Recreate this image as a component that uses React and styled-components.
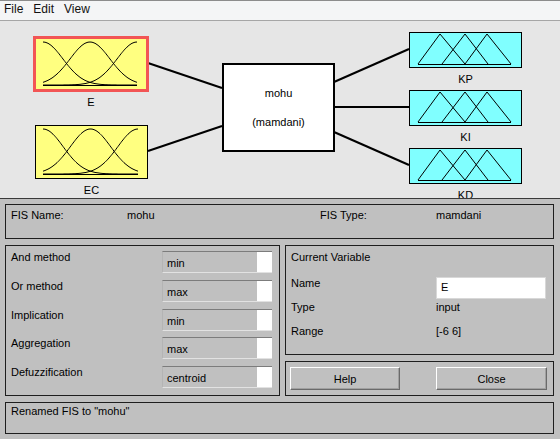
import React from 'react';
import styled, { createGlobalStyle } from 'styled-components';

const GlobalStyle = createGlobalStyle`
  html, body {
    margin: 0;
    padding: 0;
    background: #c0c0c0;
  }
  body {
    font-family: "Liberation Sans", Arial, sans-serif;
    font-size: 11px;
    color: #000;
  }
`;

const Window = styled.div`
  width: 560px;
  height: 439px;
  overflow: hidden;
  display: flex;
  flex-direction: column;
  background: #c0c0c0;
`;

const MenuBar = styled.div`
  box-sizing: border-box;
  height: 21px;
  display: flex;
  gap: 10px;
  padding: 1px 0 0 4px;
  background: #f4f5f6;
  border-top: 1px solid #8c8c8c;
  border-bottom: 1px solid #a6a6a6;
  font-size: 12px;
  line-height: 14px;
`;

const MenuItem = styled.span`
  color: #111;
`;

const Canvas = styled.div`
  position: relative;
  height: 177px;
  flex: none;
  background: #e6e6e6;
  border-bottom: 1px solid #3a3a3a;
  overflow: hidden;
`;

const Wires = styled.svg`
  position: absolute;
  left: 0;
  top: 0;
  pointer-events: none;
`;

const Node = styled.div`
  position: absolute;
  left: ${(p) => p.x}px;
  top: ${(p) => p.y}px;
  display: flex;
  flex-direction: column;
  align-items: center;
`;

const MfBox = styled.div`
  box-sizing: border-box;
  width: ${(p) => p.w}px;
  height: ${(p) => p.h}px;
  background: ${(p) => p.fill};
  border: ${(p) => (p.selected ? '3px solid #f25555' : '1px solid #000')};
  svg {
    display: block;
  }
`;

const NodeLabel = styled.div`
  margin-top: ${(p) => p.gap || 5}px;
  line-height: 13px;
`;

const SystemBox = styled.div`
  position: absolute;
  left: 222px;
  top: 42px;
  box-sizing: border-box;
  width: 113px;
  height: 89px;
  background: #fff;
  border: 2px solid #000;
  display: flex;
  flex-direction: column;
  align-items: center;
  justify-content: center;
  gap: 16px;
  line-height: 13px;
`;

const Bottom = styled.div`
  flex: 1;
  display: flex;
  flex-direction: column;
  gap: 6px;
  padding: 5px 6px 0 5px;
`;

const Panel = styled.div`
  box-sizing: border-box;
  border: 1px solid #1e1e1e;
  height: ${(p) => p.h}px;
`;

const FisPanel = styled(Panel)`
  display: grid;
  grid-template-columns: 116px 193px 116px 1fr;
  padding: 4px 0 0 5px;
  line-height: 13px;
`;

const MiddleRow = styled.div`
  display: flex;
  gap: 5px;
`;

const MethodPanel = styled(Panel)`
  width: 275px;
  padding: 5px 0 0 5px;
  display: flex;
  flex-direction: column;
`;

const MethodRow = styled.div`
  display: flex;
  align-items: flex-start;
  height: 29px;
`;

const MethodLabel = styled.div`
  width: 151px;
  line-height: 13px;
`;

const Popup = styled.div`
  box-sizing: border-box;
  width: 110px;
  height: 22px;
  display: flex;
  background: #c0c0c0;
  border-top: 1px solid #7c7c7c;
  border-left: 1px solid #b4b4b4;
  border-bottom: 1px solid #e2e2e2;
`;

const PopupText = styled.span`
  flex: 1;
  padding: 2px 0 0 4px;
  line-height: 19px;
`;

const PopupArrow = styled.span`
  width: 15px;
  background: #fff;
`;

const RightColumn = styled.div`
  width: 269px;
  display: flex;
  flex-direction: column;
  gap: 6px;
`;

const VarPanel = styled(Panel)`
  padding: 5px 0 0 5px;
`;

const VarTitle = styled.div`
  line-height: 13px;
  margin-bottom: 13px;
`;

const VarRow = styled.div`
  display: flex;
  align-items: flex-start;
  height: 24px;
  line-height: 13px;
`;

const VarLabel = styled.div`
  width: 145px;
`;

const NameField = styled.div`
  box-sizing: border-box;
  width: 110px;
  height: 22px;
  background: #fff;
  border: 1px solid #d8d8d8;
  padding-left: 4px;
  line-height: 18px;
`;

const ButtonPanel = styled(Panel)`
  display: flex;
  justify-content: space-between;
  padding: 5px 6px 0 4px;
`;

const Button = styled.div`
  box-sizing: border-box;
  width: ${(p) => p.w}px;
  height: 23px;
  display: flex;
  align-items: center;
  justify-content: center;
  background: #c0c0c0;
  border: 1px solid;
  border-color: #fff #6a6a6a #6a6a6a #fff;
  box-shadow: inset -1px -1px 0 #a0a0a0;
`;

const StatusPanel = styled(Panel)`
  padding: 2px 0 0 5px;
  line-height: 13px;
`;

function gaussPath(c, s, x0, x1, top, base) {
  const pts = [];
  for (let x = x0; x <= x1; x += 1) {
    const y = base - (base - top) * Math.exp(-((x - c) ** 2) / (2 * s * s));
    pts.push(`${x.toFixed(1)},${y.toFixed(1)}`);
  }
  return 'M' + pts.join('L');
}

function GaussPlot({ w, h }) {
  const x0 = 7;
  const x1 = w - 9;
  const top = 3;
  const base = h - 4;
  const s = (x1 - x0) * 0.2124;
  const mid = (x0 + x1) / 2;
  return (
    <svg width={w} height={h}>
      <g fill="none" stroke="#000" strokeWidth="1">
        <path d={gaussPath(x0, s, x0, x1, top, base)} />
        <path d={gaussPath(mid, s, x0, x1, top, base)} />
        <path d={gaussPath(x1, s, x0, x1, top, base)} />
        <line x1={x0} y1={base + 0.5} x2={x1} y2={base + 0.5} />
      </g>
    </svg>
  );
}

const triangles = [
  [8, 30, 55],
  [32, 55, 78],
  [55, 77, 101],
];

function TriPlot({ w, h }) {
  const top = 1;
  const base = h - 3;
  return (
    <svg width={w} height={h}>
      <g fill="none" stroke="#000" strokeWidth="1">
        {triangles.map(([a, b, c]) => (
          <polyline key={a} points={`${a},${base} ${b},${top} ${c},${base}`} />
        ))}
        <line x1={8} y1={base + 0.5} x2={101} y2={base + 0.5} />
      </g>
    </svg>
  );
}

const inputs = [
  { name: 'E', x: 33, y: 15, w: 116, h: 56, selected: true, gap: 4 },
  { name: 'EC', x: 35, y: 104, w: 113, h: 54 },
];

const outputs = [
  { name: 'KP', y: 11 },
  { name: 'KI', y: 69 },
  { name: 'KD', y: 127 },
];

const wires = [
  [148, 42, 222, 67],
  [148, 130, 222, 105],
  [334, 61, 409, 28],
  [334, 86, 409, 86],
  [334, 111, 409, 144],
];

const methods = [
  ['And method', 'min'],
  ['Or method', 'max'],
  ['Implication', 'min'],
  ['Aggregation', 'max'],
  ['Defuzzification', 'centroid'],
];

export default function App() {
  return (
    <Window>
      <GlobalStyle />
      <MenuBar>
        <MenuItem>File</MenuItem>
        <MenuItem>Edit</MenuItem>
        <MenuItem>View</MenuItem>
      </MenuBar>

      <Canvas>
        <Wires width="560" height="177">
          {wires.map(([x1, y1, x2, y2]) => (
            <line key={`${x1}-${y1}`} x1={x1} y1={y1} x2={x2} y2={y2} stroke="#000" strokeWidth="2" />
          ))}
        </Wires>

        {inputs.map((v) => {
          const b = v.selected ? 3 : 1;
          return (
            <Node key={v.name} x={v.x} y={v.y}>
              <MfBox w={v.w} h={v.h} fill="#ffff80" selected={v.selected}>
                <GaussPlot w={v.w - 2 * b} h={v.h - 2 * b} />
              </MfBox>
              <NodeLabel gap={v.gap}>{v.name}</NodeLabel>
            </Node>
          );
        })}

        <SystemBox>
          <span>mohu</span>
          <span>(mamdani)</span>
        </SystemBox>

        {outputs.map((v) => (
          <Node key={v.name} x={409} y={v.y}>
            <MfBox w={113} h={36} fill="#80ffff">
              <TriPlot w={111} h={34} />
            </MfBox>
            <NodeLabel>{v.name}</NodeLabel>
          </Node>
        ))}
      </Canvas>

      <Bottom>
        <FisPanel h={35}>
          <span>FIS Name:</span>
          <span>mohu</span>
          <span>FIS Type:</span>
          <span>mamdani</span>
        </FisPanel>

        <MiddleRow>
          <MethodPanel h={151}>
            {methods.map(([label, value]) => (
              <MethodRow key={label}>
                <MethodLabel>{label}</MethodLabel>
                <Popup>
                  <PopupText>{value}</PopupText>
                  <PopupArrow />
                </Popup>
              </MethodRow>
            ))}
          </MethodPanel>

          <RightColumn>
            <VarPanel h={110}>
              <VarTitle>Current Variable</VarTitle>
              <VarRow>
                <VarLabel>Name</VarLabel>
                <NameField>E</NameField>
              </VarRow>
              <VarRow>
                <VarLabel>Type</VarLabel>
                <span>input</span>
              </VarRow>
              <VarRow>
                <VarLabel>Range</VarLabel>
                <span>[-6 6]</span>
              </VarRow>
            </VarPanel>
            <ButtonPanel h={35}>
              <Button w={110}>Help</Button>
              <Button w={111}>Close</Button>
            </ButtonPanel>
          </RightColumn>
        </MiddleRow>

        <StatusPanel h={32}>Renamed FIS to "mohu"</StatusPanel>
      </Bottom>
    </Window>
  );
}
